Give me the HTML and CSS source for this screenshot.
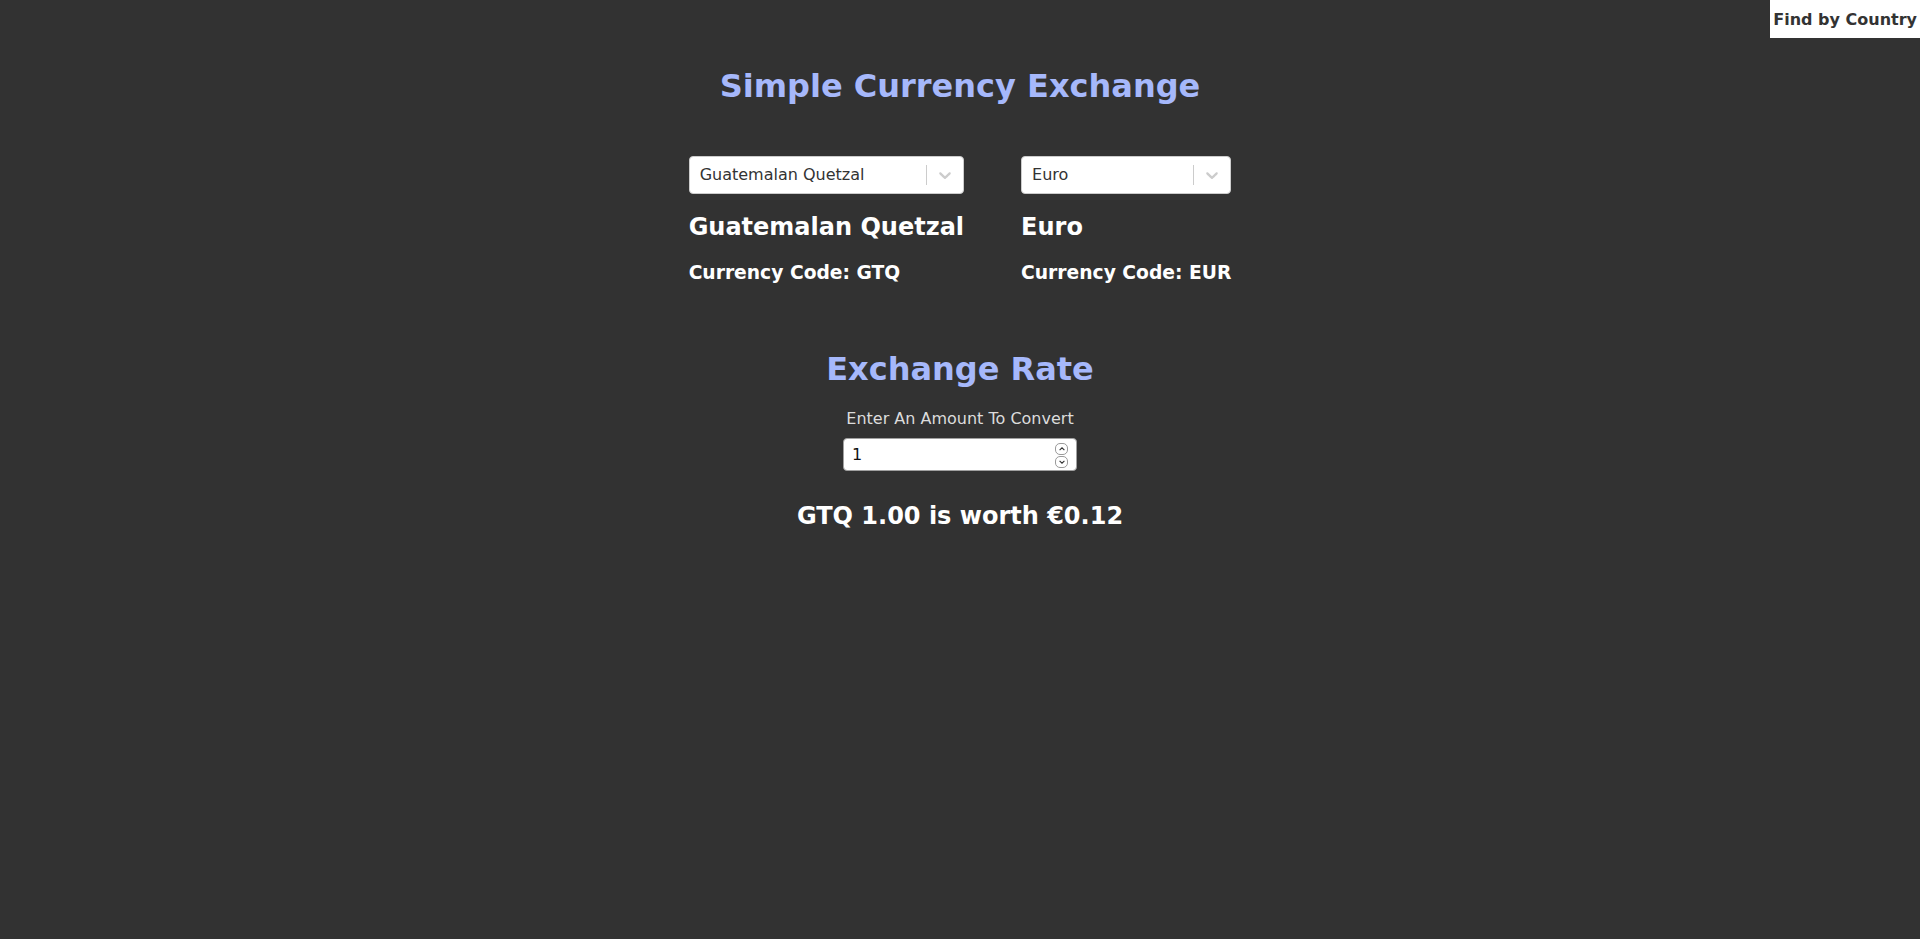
FILE: index.html
```html
<!DOCTYPE html>
<html lang="en">
<head>
<meta charset="utf-8">
<title>Simple Currency Exchange</title>
<link rel="stylesheet" href="styles.css">
</head>
<body>
<button class="find-btn">Find by Country</button>
<main class="app">
  <h1 class="title">Simple Currency Exchange</h1>
  <section class="pair">
    <div class="col">
      <div class="select">
        <div class="select-value">Guatemalan Quetzal</div>
        <div class="select-indicators">
          <span class="select-sep"></span>
          <span class="select-arrow">
            <svg viewBox="0 0 20 20" width="20" height="20"><path d="M4.516 7.548c0.436-0.446 1.043-0.481 1.576 0l3.908 3.747 3.908-3.747c0.533-0.481 1.141-0.446 1.574 0 0.436 0.445 0.408 1.197 0 1.615-0.406 0.418-4.695 4.502-4.695 4.502-0.217 0.223-0.502 0.335-0.787 0.335s-0.57-0.112-0.789-0.335c0 0-4.287-4.084-4.695-4.502s-0.436-1.170 0-1.615z"/></svg>
          </span>
        </div>
      </div>
      <h2 class="name">Guatemalan Quetzal</h2>
      <h3 class="code">Currency Code: GTQ</h3>
    </div>
    <div class="col">
      <div class="select">
        <div class="select-value">Euro</div>
        <div class="select-indicators">
          <span class="select-sep"></span>
          <span class="select-arrow">
            <svg viewBox="0 0 20 20" width="20" height="20"><path d="M4.516 7.548c0.436-0.446 1.043-0.481 1.576 0l3.908 3.747 3.908-3.747c0.533-0.481 1.141-0.446 1.574 0 0.436 0.445 0.408 1.197 0 1.615-0.406 0.418-4.695 4.502-4.695 4.502-0.217 0.223-0.502 0.335-0.787 0.335s-0.57-0.112-0.789-0.335c0 0-4.287-4.084-4.695-4.502s-0.436-1.170 0-1.615z"/></svg>
          </span>
        </div>
      </div>
      <h2 class="name">Euro</h2>
      <h3 class="code">Currency Code: EUR</h3>
    </div>
  </section>
  <h1 class="rate">Exchange Rate</h1>
  <label class="amount-label" for="amount">Enter An Amount To Convert</label>
  <div class="amount-wrap">
    <input id="amount" class="amount" type="number" value="1">
    <div class="spinner">
      <span class="spin-btn"><svg viewBox="0 0 10 10" width="8" height="8"><path d="M2 6.5 L5 3.5 L8 6.5" /></svg></span>
      <span class="spin-btn"><svg viewBox="0 0 10 10" width="8" height="8"><path d="M2 3.5 L5 6.5 L8 3.5" /></svg></span>
    </div>
  </div>
  <h2 class="result">GTQ 1.00 is worth €0.12</h2>
</main>
</body>
</html>
```
FILE: styles.css
```css
* { box-sizing: border-box; }

html, body {
  margin: 0;
  padding: 0;
  background: #323232;
  font-family: "DejaVu Sans", "Liberation Sans", sans-serif;
  color: #fff;
  min-height: 939px;
}

.find-btn {
  position: absolute;
  top: 0;
  right: 0;
  height: 38px;
  margin: 0;
  padding: 0 3px;
  border: none;
  background: #fff;
  color: #333;
  font-family: "DejaVu Sans", sans-serif;
  font-weight: bold;
  font-size: 16px;
  line-height: 19px;
  white-space: nowrap;
  text-align: center;
}

.app {
  display: flex;
  flex-direction: column;
  align-items: center;
  padding-top: 68px;
}

.title, .rate {
  margin: 0;
  font-size: 32px;
  line-height: 37px;
  font-weight: bold;
  color: #a6b8fb;
}

.pair {
  display: flex;
  gap: 57px;
  margin-top: 51px;
}

.col {
  display: flex;
  flex-direction: column;
}

.select {
  display: flex;
  align-items: center;
  height: 38px;
  background: #fff;
  border: 1px solid #ccc;
  border-radius: 4px;
}

.select-value {
  flex: 1;
  padding: 2px 8px;
  margin: 0 2px;
  color: #333;
  font-size: 16px;
  line-height: 20px;
  white-space: nowrap;
}

.select-indicators {
  display: flex;
  align-items: center;
  align-self: stretch;
}

.select-sep {
  width: 1px;
  align-self: stretch;
  margin: 8px 0;
  background: #ccc;
}

.select-arrow {
  display: flex;
  padding: 8px;
}

.select-arrow svg {
  fill: #ccc;
}

.name {
  margin: 19px 0 0;
  font-size: 24px;
  line-height: 28px;
  font-weight: bold;
  white-space: nowrap;
}

.code {
  margin: 21px 0 0;
  font-size: 18.72px;
  line-height: 22px;
  font-weight: bold;
  white-space: nowrap;
}

.rate {
  margin-top: 67px;
}

.amount-label {
  margin-top: 21px;
  font-size: 16px;
  line-height: 19px;
  color: #dcdcdc;
}

.amount-wrap {
  position: relative;
  margin-top: 10px;
  width: 234px;
  height: 33px;
}

.amount {
  width: 100%;
  height: 100%;
  margin: 0;
  padding: 0 30px 0 8px;
  border: 1px solid #a0a0a0;
  border-radius: 4px;
  background: #fff;
  color: #111;
  font-family: "DejaVu Sans", sans-serif;
  font-size: 16px;
  -moz-appearance: textfield;
  appearance: textfield;
}

.amount::-webkit-inner-spin-button,
.amount::-webkit-outer-spin-button {
  -webkit-appearance: none;
  margin: 0;
}

.spinner {
  position: absolute;
  right: 9px;
  top: 5px;
  display: flex;
  flex-direction: column;
  gap: 1px;
}

.spin-btn {
  display: flex;
  align-items: center;
  justify-content: center;
  width: 13px;
  height: 12px;
  border: 1px solid #9a9a9a;
  border-radius: 5px;
  background: #fff;
}

.spin-btn svg {
  fill: none;
  stroke: #333;
  stroke-width: 1.4;
}

.result {
  margin: 31px 0 0;
  font-size: 24px;
  line-height: 28px;
  font-weight: bold;
}
```
